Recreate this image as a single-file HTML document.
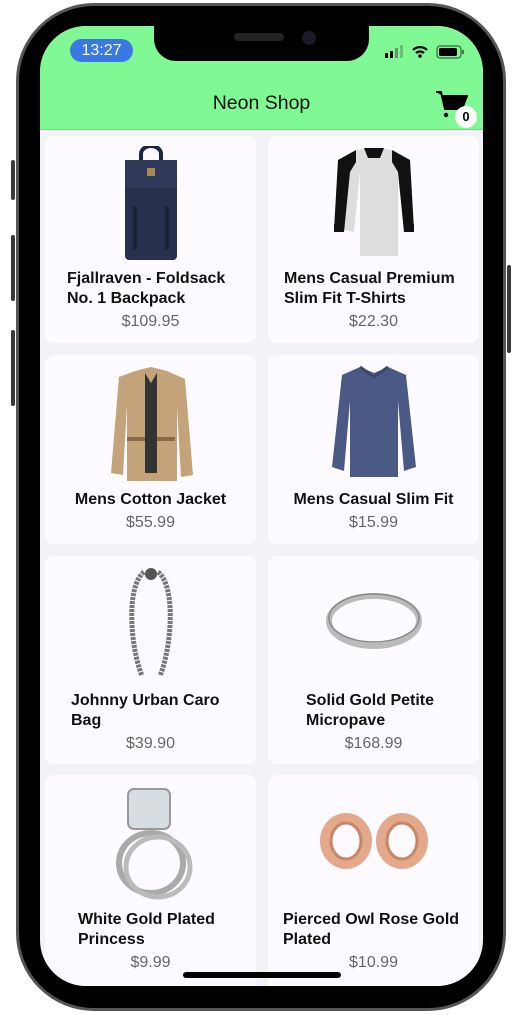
<!DOCTYPE html>
<html><head><meta charset="utf-8"><style>
*{margin:0;padding:0;box-sizing:border-box}
body{width:522px;height:1015px;background:#fff;position:relative;overflow:hidden;font-family:"Liberation Sans",sans-serif}
.btn{position:absolute;background:#3a3a3a;border-radius:2px}
.phone{position:absolute;left:16px;top:3px;width:490px;height:1008px;border-radius:78px;background:#000;border:3px solid #555}
.screen{position:absolute;left:40px;top:26px;width:443px;height:960px;border-radius:46px;overflow:hidden;background:#f2f2f7}
.header{position:absolute;left:0;top:0;width:443px;height:104px;background:#80f994;border-bottom:1px solid #6cd880}
.notch{position:absolute;left:114px;top:-2px;width:215px;height:37px;background:#000;border-radius:0 0 22px 22px}
.time{position:absolute;left:30px;top:13px;width:63px;height:23px;border-radius:12px;background:#3a78e6;color:#fff;font-size:16px;text-align:center;line-height:23px}
.title{position:absolute;left:0;width:443px;top:66px;text-align:center;font-size:19.5px;color:#111}
.card{position:absolute;width:211px;background:#fdfbff;border-radius:9px;text-align:center}
.card .t{display:inline-block;text-align:left;font-weight:bold;font-size:16px;line-height:19.5px;color:#111;position:absolute;left:0;right:0}
.card .p{position:absolute;left:0;right:0;font-size:16px;color:#666}
.img{position:absolute;left:50%;transform:translateX(-50%)}
</style></head><body>
<div class="btn" style="left:11px;top:160px;width:4px;height:40px"></div>
<div class="btn" style="left:11px;top:235px;width:4px;height:66px"></div>
<div class="btn" style="left:11px;top:330px;width:4px;height:76px"></div>
<div class="btn" style="left:507px;top:265px;width:4px;height:88px"></div>
<div class="phone"></div>
<div class="screen">
 <div class="header">
  <div class="notch"><div style="position:absolute;left:80px;top:9px;width:50px;height:8px;border-radius:4px;background:#222"></div><div style="position:absolute;left:148px;top:7px;width:14px;height:14px;border-radius:50%;background:#1a1a2a"></div></div>
  <div class="time">13:27</div>
  <svg style="position:absolute;left:345px;top:19px" width="85" height="14" viewBox="0 0 85 14">
   <rect x="0" y="8" width="3" height="5" fill="#000"/><rect x="5" y="6" width="3" height="7" fill="#000"/><rect x="10" y="3" width="3" height="10" fill="#3a3a3a" opacity=".5"/><rect x="15" y="0" width="3" height="13" fill="#3a3a3a" opacity=".3"/>
   <path d="M28 5a10 10 0 0 1 14 0M31 8a6 6 0 0 1 8 0" stroke="#000" stroke-width="2.2" fill="none"/><circle cx="35" cy="11" r="1.8" fill="#000"/>
   <rect x="52" y="1" width="24" height="12" rx="3" stroke="#000" stroke-width="1.2" fill="none" opacity=".6"/><rect x="54" y="3" width="18" height="8" rx="1.5" fill="#000"/><rect x="77" y="5" width="2" height="4" fill="#000" opacity=".5"/>
  </svg>
  <div class="title">Neon Shop</div>
  <svg style="position:absolute;left:396px;top:65px" width="32" height="28" viewBox="0 0 32 28"><path d="M0 1h5l4 17h17l5-13H7" fill="#000" stroke="#000" stroke-width="2"/><circle cx="10" cy="24" r="2.2" fill="#000"/><circle cx="23" cy="24" r="2.2" fill="#000"/></svg>
  <div style="position:absolute;left:415px;top:80px;width:22px;height:22px;border-radius:50%;background:#fff;font-weight:bold;font-size:13px;text-align:center;line-height:22px">0</div>
 </div>

 <div class="card" style="left:5px;top:110px;height:207px">
  <svg class="img" style="top:10px" width="60" height="118" viewBox="0 0 60 118"><path d="M20 14v-6a10 8 0 0 1 20 0v6" stroke="#1e2540" stroke-width="4" fill="none"/><rect x="4" y="14" width="52" height="100" rx="4" fill="#28304e"/><rect x="4" y="14" width="52" height="28" fill="#2f3858"/><rect x="26" y="22" width="8" height="8" fill="#a88a50"/><rect x="12" y="60" width="4" height="44" fill="#1c2238"/><rect x="44" y="60" width="4" height="44" fill="#1c2238"/></svg>
  <div class="t" style="top:133px;left:22px">Fjallraven - Foldsack<br>No. 1 Backpack</div>
  <div class="p" style="top:177px">$109.95</div>
 </div>
 <div class="card" style="left:228px;top:110px;height:207px">
  <svg class="img" style="top:12px" width="80" height="112" viewBox="0 0 80 112"><path d="M22 2l12-2h12l12 2 18 10 4 70-10 2-6-60v84H26V24l-6 60-10-2 4-70z" fill="#ddd"/><path d="M22 2L4 12 0 82l10 2 6-60 6-10zM58 2l18 10 4 70-10 2-6-60-6-10z" fill="#111"/><path d="M30 0h20l-4 10H34z" fill="#111"/><rect x="0" y="76" width="10" height="8" fill="#111"/><rect x="70" y="76" width="10" height="8" fill="#111"/></svg>
  <div class="t" style="top:133px;left:16px">Mens Casual Premium<br>Slim Fit T-Shirts</div>
  <div class="p" style="top:177px">$22.30</div>
 </div>

 <div class="card" style="left:5px;top:329px;height:189px">
  <svg class="img" style="top:12px" width="92" height="114" viewBox="0 0 92 114"><path d="M30 4l16-4 16 4 18 8 8 96-12 2-4-70v74H22V38l-4 70-12-2 8-96z" fill="#c4a27a"/><path d="M40 6l6 10 6-10v100h-12z" fill="#333"/><rect x="22" y="70" width="18" height="4" fill="#8a6a48"/><rect x="52" y="70" width="18" height="4" fill="#8a6a48"/></svg>
  <div class="t" style="top:135px;text-align:center">Mens Cotton Jacket</div>
  <div class="p" style="top:159px">$55.99</div>
 </div>
 <div class="card" style="left:228px;top:329px;height:189px">
  <svg class="img" style="top:10px" width="92" height="114" viewBox="0 0 92 114"><path d="M32 2l14 6 14-6 18 8 10 92-12 4-6-70v76H22V36l-6 70-12-4 10-92z" fill="#4b5a85"/><path d="M32 2l14 10 14-10" stroke="#3b4870" stroke-width="3" fill="none"/></svg>
  <div class="t" style="top:135px;text-align:center">Mens Casual Slim Fit</div>
  <div class="p" style="top:159px">$15.99</div>
 </div>

 <div class="card" style="left:5px;top:530px;height:208px">
  <svg class="img" style="top:10px" width="70" height="118" viewBox="0 0 70 118"><path d="M28 6C10 20 14 80 26 110M42 6c18 14 14 74 2 104" stroke="#777" stroke-width="5" fill="none" stroke-dasharray="3 1"/><circle cx="35" cy="8" r="6" fill="#555"/></svg>
  <div class="t" style="top:135px;left:26px">Johnny Urban Caro<br>Bag</div>
  <div class="p" style="top:179px">$39.90</div>
 </div>
 <div class="card" style="left:228px;top:530px;height:208px">
  <svg class="img" style="top:30px" width="100" height="70" viewBox="0 0 100 70"><ellipse cx="50" cy="35" rx="45" ry="25" fill="none" stroke="#bbb" stroke-width="6"/><ellipse cx="50" cy="32" rx="45" ry="24" fill="none" stroke="#888" stroke-width="1.5"/></svg>
  <div class="t" style="top:135px;left:38px">Solid Gold Petite<br>Micropave</div>
  <div class="p" style="top:179px">$168.99</div>
 </div>

 <div class="card" style="left:5px;top:749px;height:230px">
  <svg class="img" style="top:10px" width="90" height="116" viewBox="0 0 90 116"><rect x="22" y="4" width="42" height="40" rx="6" fill="#d8dde2" stroke="#999" stroke-width="2"/><ellipse cx="45" cy="78" rx="32" ry="30" fill="none" stroke="#aaa" stroke-width="6"/><ellipse cx="52" cy="82" rx="32" ry="30" fill="none" stroke="#bbb" stroke-width="5"/></svg>
  <div class="t" style="top:135px;left:33px">White Gold Plated<br>Princess</div>
  <div class="p" style="top:179px">$9.99</div>
 </div>
 <div class="card" style="left:228px;top:749px;height:230px">
  <svg class="img" style="top:30px" width="120" height="70" viewBox="0 0 120 70"><ellipse cx="32" cy="36" rx="26" ry="28" fill="#e3a98a"/><ellipse cx="32" cy="36" rx="15" ry="18" fill="#fdfbff" stroke="#c98566" stroke-width="3"/><ellipse cx="88" cy="36" rx="26" ry="28" fill="#e3a98a"/><ellipse cx="88" cy="36" rx="15" ry="18" fill="#fdfbff" stroke="#c98566" stroke-width="3"/></svg>
  <div class="t" style="top:135px;left:15px">Pierced Owl Rose Gold<br>Plated</div>
  <div class="p" style="top:179px">$10.99</div>
 </div>

 <div style="position:absolute;left:143px;top:946px;width:158px;height:6px;border-radius:3px;background:#000"></div>
</div>
</body></html>
